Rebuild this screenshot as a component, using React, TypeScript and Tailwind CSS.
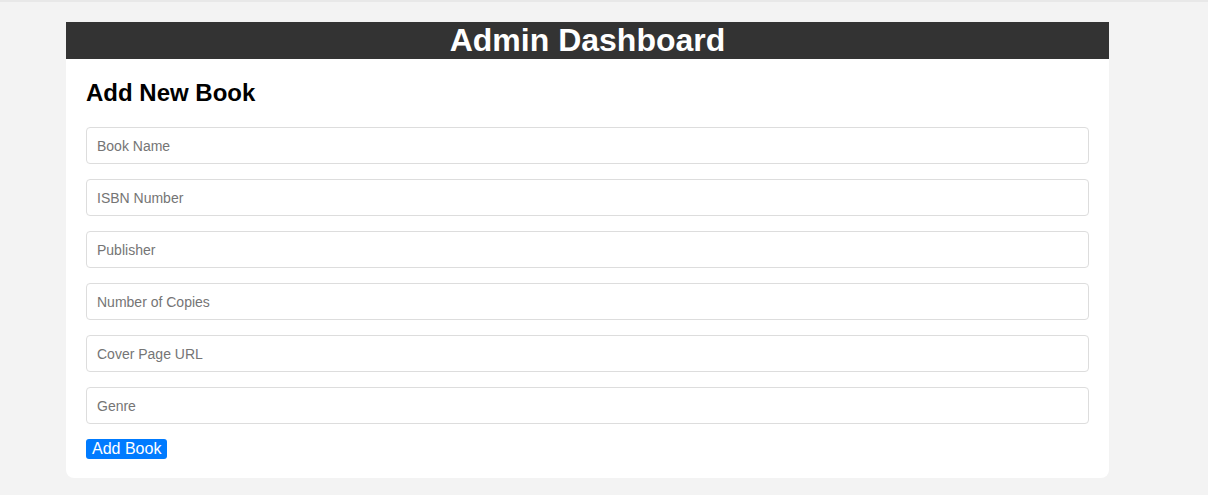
const fields = ['Book Name', 'ISBN Number', 'Publisher', 'Number of Copies', 'Cover Page URL', 'Genre'];

export default function App() {
  return (
    <div
      className="min-h-[495px] bg-[#f3f3f3] border-t-2 border-[#e8e8e8] pt-[20px]"
      style={{ fontFamily: '"Liberation Sans", Arial, sans-serif' }}
    >
      <div className="ml-[66px] w-[1043px]">
        {/* Header bar */}
        <div className="bg-[#333333] h-[37px] flex items-center justify-center">
          <h1 className="text-white text-[32px] font-bold leading-[37px]">Admin Dashboard</h1>
        </div>

        {/* Form card */}
        <div className="bg-white rounded-b-lg px-[20px] pt-[20px] pb-[19px]">
          <h2 className="text-[24px] font-bold text-black leading-[28px] mb-[20px]">Add New Book</h2>
          <form className="flex flex-col items-start gap-[15px]" onSubmit={(e) => e.preventDefault()}>
            {fields.map((f) => (
              <input
                key={f}
                type="text"
                placeholder={f}
                className="h-[37px] w-full border border-[#dddddd] rounded-[4px] px-[10px] text-[14px] text-[#333] placeholder:text-[#757575] outline-none"
              />
            ))}
            <button
              type="submit"
              className="bg-[#007bff] text-white text-[16px] leading-[18px] px-[6px] py-[1px] rounded-[3px]"
            >
              Add Book
            </button>
          </form>
        </div>
      </div>
    </div>
  );
}
